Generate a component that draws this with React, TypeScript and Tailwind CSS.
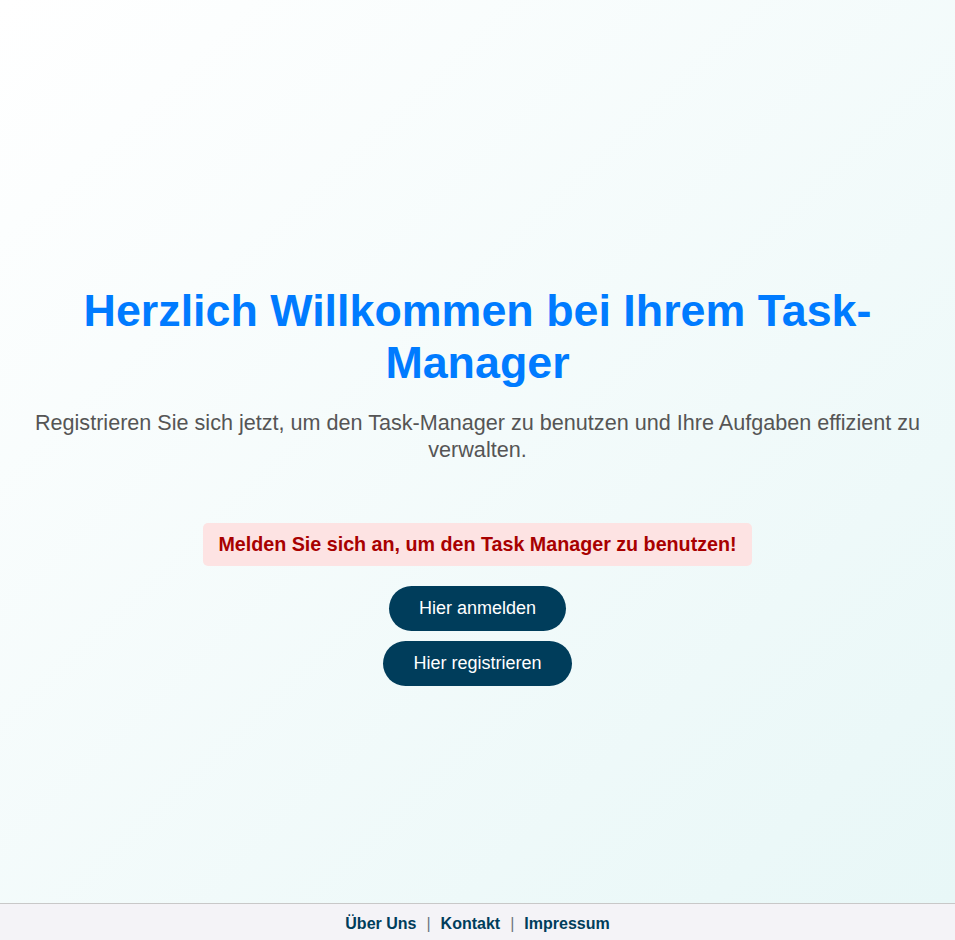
export default function App() {
  return (
    <div
      className="min-h-screen flex flex-col"
      style={{ fontFamily: '"Liberation Sans", Arial, sans-serif' }}
    >
      <main className="flex-1 bg-gradient-to-br from-white to-[#e8f7f7] px-5 pt-[285px] pb-[217px] text-center">
        <h1 className="text-[44.8px] leading-[1.15] font-bold text-[#007bff]">
          Herzlich Willkommen bei Ihrem Task-Manager
        </h1>
        <p className="mt-[21px] text-[21.6px] leading-[27px] text-[#555]">
          Registrieren Sie sich jetzt, um den Task-Manager zu benutzen und Ihre Aufgaben effizient zu verwalten.
        </p>

        <div className="mt-[60px] flex flex-col items-center">
          <div className="rounded-[5px] bg-[#fde3e3] px-[15px] py-[10px] text-[19.7px] leading-[23px] font-bold text-[#a80000]">
            Melden Sie sich an, um den Task Manager zu benutzen!
          </div>
          <div className="mt-5 flex flex-col items-center gap-[10px]">
            <button className="rounded-full bg-[#003d5b] px-[30px] py-3 text-[18px] leading-[21px] text-white">
              Hier anmelden
            </button>
            <button className="rounded-full bg-[#003d5b] px-[30px] py-3 text-[18px] leading-[21px] text-white">
              Hier registrieren
            </button>
          </div>
        </div>
      </main>

      <footer className="border-t border-[#c8c8c8] bg-[#f4f3f7] pt-[11px] pb-[7px] text-center text-[16px] leading-[18px] font-bold text-[#003d5b]">
        <a href="#">Über Uns</a>
        <span className="mx-[10px] font-normal text-[#6c757d]">|</span>
        <a href="#">Kontakt</a>
        <span className="mx-[10px] font-normal text-[#6c757d]">|</span>
        <a href="#">Impressum</a>
      </footer>
    </div>
  );
}
